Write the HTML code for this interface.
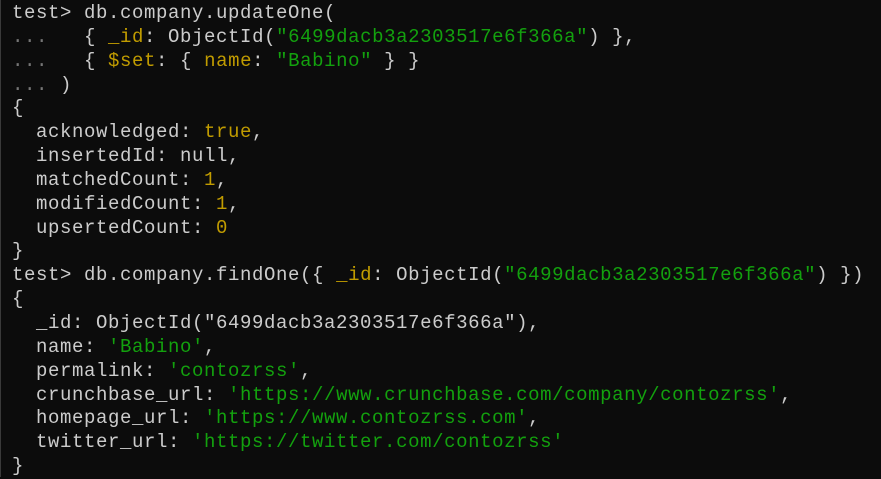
<!DOCTYPE html>
<html><head><style>
html,body{margin:0;padding:0;background:#0c0c0c;width:881px;height:477px;overflow:hidden}
pre{margin:0;position:absolute;left:12px;top:2px;font-family:"Liberation Mono",monospace;font-size:19px;line-height:23.85px;color:#cccccc;letter-spacing:0.6px}
.y{color:#c19c00}.g{color:#13a10e}.d{color:#767676}
.edge{position:absolute;left:0;top:0;width:1px;height:477px;background:#3a3a3a}
</style></head><body><div class="edge"></div><pre>test&gt; db.company.updateOne(
<span class="d">...</span>   { <span class="y">_id</span>: ObjectId(<span class="g">"6499dacb3a2303517e6f366a"</span>) },
<span class="d">...</span>   { <span class="y">$set</span>: { <span class="y">name</span>: <span class="g">"Babino"</span> } }
<span class="d">...</span> )
{
  acknowledged: <span class="y">true</span>,
  insertedId: null,
  matchedCount: <span class="y">1</span>,
  modifiedCount: <span class="y">1</span>,
  upsertedCount: <span class="y">0</span>
}
test&gt; db.company.findOne({ <span class="y">_id</span>: ObjectId(<span class="g">"6499dacb3a2303517e6f366a"</span>) })
{
  _id: ObjectId("6499dacb3a2303517e6f366a"),
  name: <span class="g">'Babino'</span>,
  permalink: <span class="g">'contozrss'</span>,
  crunchbase_url: <span class="g">'https://www.crunchbase.com/company/contozrss'</span>,
  homepage_url: <span class="g">'https://www.contozrss.com'</span>,
  twitter_url: <span class="g">'https://twitter.com/contozrss'</span>
}</pre></body></html>
